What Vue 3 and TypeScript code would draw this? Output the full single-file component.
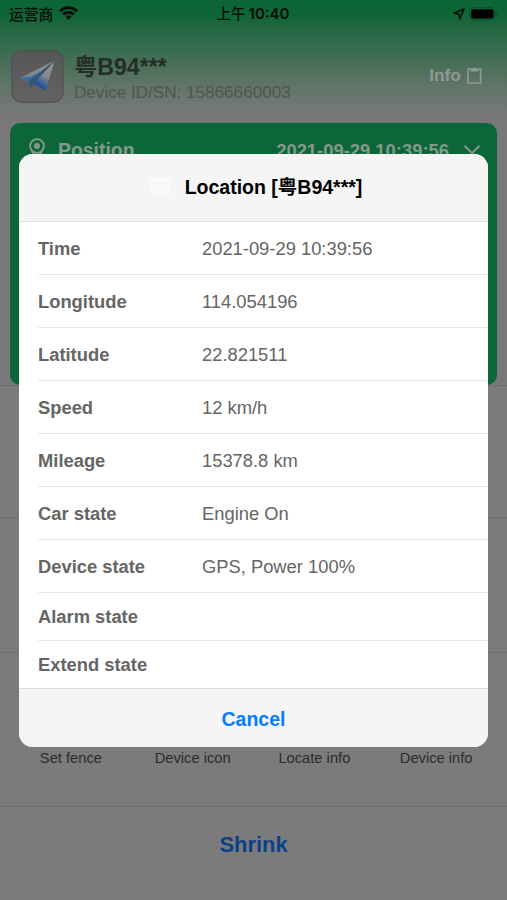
<script setup lang="ts">
interface InfoRow {
  label: string
  value: string
  compact?: boolean
}

const plate = '粤B94***'

const rows: InfoRow[] = [
  { label: 'Time', value: '2021-09-29 10:39:56' },
  { label: 'Longitude', value: '114.054196' },
  { label: 'Latitude', value: '22.821511' },
  { label: 'Speed', value: '12 km/h' },
  { label: 'Mileage', value: '15378.8 km' },
  { label: 'Car state', value: 'Engine On' },
  { label: 'Device state', value: 'GPS, Power 100%' },
  { label: 'Alarm state', value: '', compact: true },
  { label: 'Extend state', value: '', compact: true },
]

const actions: string[] = ['Set fence', 'Device icon', 'Locate info', 'Device info']
</script>

<template>
  <div class="screen">
    <div class="top">
      <div class="status">
        <div class="carrier">
          <span>运营商</span>
          <svg class="wifi" width="19" height="14" viewBox="0 0 19 14" fill="none" stroke="#020d07" stroke-width="2.9">
            <path d="M1.1 5.1a12 12 0 0 1 16.8 0" />
            <path d="M4.2 8.5a7.5 7.5 0 0 1 10.6 0" />
            <path d="M9.5 13.7 6.5 10.7a4.3 4.3 0 0 1 6 0Z" fill="#020d07" stroke="none" />
          </svg>
        </div>
        <div class="clock"><span class="meridiem">上午</span><span>10:40</span></div>
        <div class="indicators">
          <svg width="12" height="12" viewBox="0 0 12 12" fill="none" stroke="#020d07" stroke-width="1.5" stroke-linejoin="round">
            <path d="M11 1 1 5.2 5.8 6.1 6.8 11Z" />
          </svg>
          <svg width="30" height="14" viewBox="0 0 30 14">
            <rect x=".6" y=".6" width="25.4" height="12.4" rx="3.8" fill="none" stroke="#0a4d2a" stroke-width="1" />
            <rect x="2.1" y="2.2" width="22.4" height="9.2" rx="2.2" fill="#000" />
            <path d="M27.2 4.6q1.8 2.2 0 4.4Z" fill="#0a4327" />
          </svg>
        </div>
      </div>

      <div class="device">
        <svg class="app-icon" width="53" height="53" viewBox="0 0 53 53">
          <defs>
            <linearGradient id="tile" x1="0" y1="0" x2="0" y2="1">
              <stop offset="0" stop-color="#555756" />
              <stop offset="1" stop-color="#646263" />
            </linearGradient>
            <linearGradient id="wing" x1="1" y1="0" x2="0" y2="1">
              <stop offset="0" stop-color="#8f9193" />
              <stop offset=".6" stop-color="#85898d" />
              <stop offset="1" stop-color="#5c7b9c" />
            </linearGradient>
            <linearGradient id="fold" gradientUnits="userSpaceOnUse" x1="42" y1="14" x2="28" y2="39">
              <stop offset="0" stop-color="#929496" />
              <stop offset=".5" stop-color="#84898f" />
              <stop offset=".85" stop-color="#24599a" />
              <stop offset="1" stop-color="#174e88" />
            </linearGradient>
          </defs>
          <rect x="1" y="1" width="51" height="51" rx="9.5" fill="url(#tile)" stroke="#505251" stroke-width="1.3" />
          <path d="M43.7 10.5 8.5 28.2 17.4 31.6Z" fill="url(#wing)" />
          <path d="M8.5 28.2 17.4 31.6 31 20.8 20 26.5Z" fill="#3b6c9f" />
          <path d="M43.7 10.5 17.4 31.6 19.8 37.4 23.6 33.8Z" fill="#34577d" />
          <path d="M43.7 10.5 22.6 33.2 34.5 40.8Z" fill="url(#fold)" />
          <path d="M43.7 10.5 22.6 33.2" stroke="#454c54" stroke-width=".9" />
        </svg>
        <div class="identity">
          <div class="plate">{{ plate }}</div>
          <div class="serial">Device ID/SN: 15866660003</div>
        </div>
        <div class="info">
          <span>Info</span>
          <svg width="17" height="19" viewBox="0 0 17 19">
            <path d="M5 3H2v14h12.6V3h-3" fill="none" stroke="#929895" stroke-width="1.7" />
            <path d="M4.5 5.4V2.6h2.1a1.8 1.8 0 0 1 3.4 0h2.1v2.8Z" fill="#929895" />
          </svg>
        </div>
      </div>

      <div class="card">
        <svg width="18" height="24" viewBox="0 0 18 24" fill="none" stroke="#84998c">
          <circle cx="9" cy="8" r="6.9" stroke-width="1.9" />
          <circle cx="9" cy="8" r="3" fill="#84998c" stroke="none" />
          <path d="M4.2 13 9 22l4.8-9" stroke-width="2" />
        </svg>
        <span class="card-title">Position</span>
        <span class="card-time">2021-09-29 10:39:56</span>
        <svg class="chevron" width="18" height="12" viewBox="0 0 18 12" fill="none" stroke="#84998c" stroke-width="2">
          <path d="M1.5 1.7 9 9.2l7.5-7.5" />
        </svg>
      </div>
    </div>

    <div class="sheet">
      <div class="band first"></div>
      <div class="band second"></div>
      <div class="band actions">
        <span v-for="action in actions" :key="action">{{ action }}</span>
      </div>
      <div class="shrink">Shrink</div>
    </div>

    <div class="overlay">
      <div class="dialog">
        <div class="dialog-head">
          <svg class="calendar" width="21" height="19" viewBox="0 0 21 19">
            <rect x=".5" y=".5" width="20" height="18" rx="2.5" fill="#fafafa" />
            <path d="M2 5.5h17M7 10h8M7 12.5h8" stroke="#f6f6f6" />
          </svg>
          <span>Location [{{ plate }}]</span>
        </div>
        <div class="rows">
          <div v-for="row in rows" :key="row.label" class="row" :class="{ compact: row.compact }">
            <span class="label">{{ row.label }}</span>
            <span class="value">{{ row.value }}</span>
          </div>
        </div>
        <div class="cancel">Cancel</div>
      </div>
    </div>
  </div>
</template>

<style>
body {
  background: #7b7b7b;
}
</style>

<style scoped>
.screen {
  position: relative;
  width: 507px;
  height: 900px;
  overflow: hidden;
  font-family: "Liberation Sans", "Noto Sans CJK SC", sans-serif;
  white-space: nowrap;
  box-sizing: border-box;
}
.screen *,
.screen *::before {
  box-sizing: border-box;
}
svg {
  display: block;
  flex: none;
}
.top {
  height: 385px;
  background: linear-gradient(#0b6635 0, #0e6536 14px, #2d6a49 38px, #4a7059 66px, #65756b 90px, #767778 112px, #79787b 125px, #79787b 100%);
}
.status {
  display: grid;
  grid-template-columns: 1fr auto 1fr;
  align-items: center;
  height: 28px;
  padding: 0 8px 0 9px;
  color: #020d07;
}
.carrier {
  display: flex;
  align-items: center;
  gap: 6px;
  font: 500 14.8px/26px "Noto Sans CJK SC", sans-serif;
}
.wifi {
  margin-top: -2px;
}
.clock {
  display: flex;
  gap: 3px;
  padding-right: 2px;
  font: 600 15px/28px Inter, "Noto Sans CJK SC", sans-serif;
}
.meridiem {
  font: 500 14.5px/26px "Noto Sans CJK SC", sans-serif;
}
.indicators {
  display: flex;
  align-items: center;
  justify-content: flex-end;
  gap: 4px;
}
.device {
  display: flex;
  align-items: center;
  height: 95px;
  padding: 2px 24px 0 11px;
}
.identity {
  margin: 4px 0 0 10px;
}
.plate {
  font-size: 23.2px;
  font-weight: 700;
  line-height: 28px;
  color: #242d28;
}
.serial {
  font-size: 17.1px;
  line-height: 24px;
  color: #4f5652;
}
.info {
  display: flex;
  align-items: center;
  gap: 5px;
  margin-left: auto;
  margin-top: -3px;
  font-size: 17.4px;
  font-weight: 700;
  color: #929895;
}
.card {
  display: flex;
  align-items: flex-start;
  height: 262px;
  margin: 0 10px;
  padding: 15px 16px 0 18px;
  border-radius: 10px;
  background: #0c6638;
  color: #84998c;
  font-weight: 700;
  line-height: 25px;
}
.card-title {
  margin-left: 12px;
  font-size: 19.4px;
}
.card-time {
  margin-left: auto;
  font-size: 18.4px;
}
.chevron {
  margin: 6px 0 0 14px;
}
.sheet {
  height: 515px;
  background: #7b7b7b;
  border-top: 1px solid #6d6d6d;
}
.band {
  border-bottom: 1px solid #6f6f6f;
}
.first {
  height: 132px;
}
.second {
  height: 135px;
}
.actions {
  display: grid;
  grid-template-columns: repeat(4, 1fr);
  height: 154px;
  padding: 95px 10px 0;
  font-size: 14.7px;
  line-height: 20px;
  text-align: center;
  color: #2b2b2b;
}
.shrink {
  height: 74px;
  font-size: 21.9px;
  font-weight: 700;
  line-height: 75px;
  text-align: center;
  color: #0a4288;
}
.overlay {
  position: absolute;
  inset: 0;
  display: flex;
  align-items: flex-start;
  justify-content: center;
  padding-top: 154px;
}
.dialog {
  width: 469px;
  height: 593px;
  border-radius: 14px;
  overflow: hidden;
  background: #fff;
}
.dialog-head {
  display: flex;
  align-items: center;
  justify-content: center;
  gap: 14px;
  height: 68px;
  padding: 0 0 5px 5px;
  border-bottom: 1px solid #dedede;
  background: #f5f5f5;
  color: #000;
  font-size: 19.5px;
  font-weight: 700;
}
.calendar {
  margin-top: 2px;
}
.rows {
  height: 466px;
  padding-left: 19px;
}
.row {
  display: grid;
  grid-template-columns: 164px 1fr;
  align-items: center;
  height: 53px;
  padding-top: 2px;
  border-bottom: 1px solid #e8e8e8;
  font-size: 18.35px;
  color: #656565;
}
.row.compact {
  height: 48px;
  padding-top: 0;
}
.row:last-child {
  height: 47px;
  border-bottom: 0;
}
.label {
  font-weight: 700;
}
.cancel {
  height: 59px;
  border-top: 1px solid #dedede;
  background: #f5f5f5;
  color: #087cff;
  font-size: 19.5px;
  font-weight: 700;
  line-height: 60px;
  text-align: center;
}
</style>
